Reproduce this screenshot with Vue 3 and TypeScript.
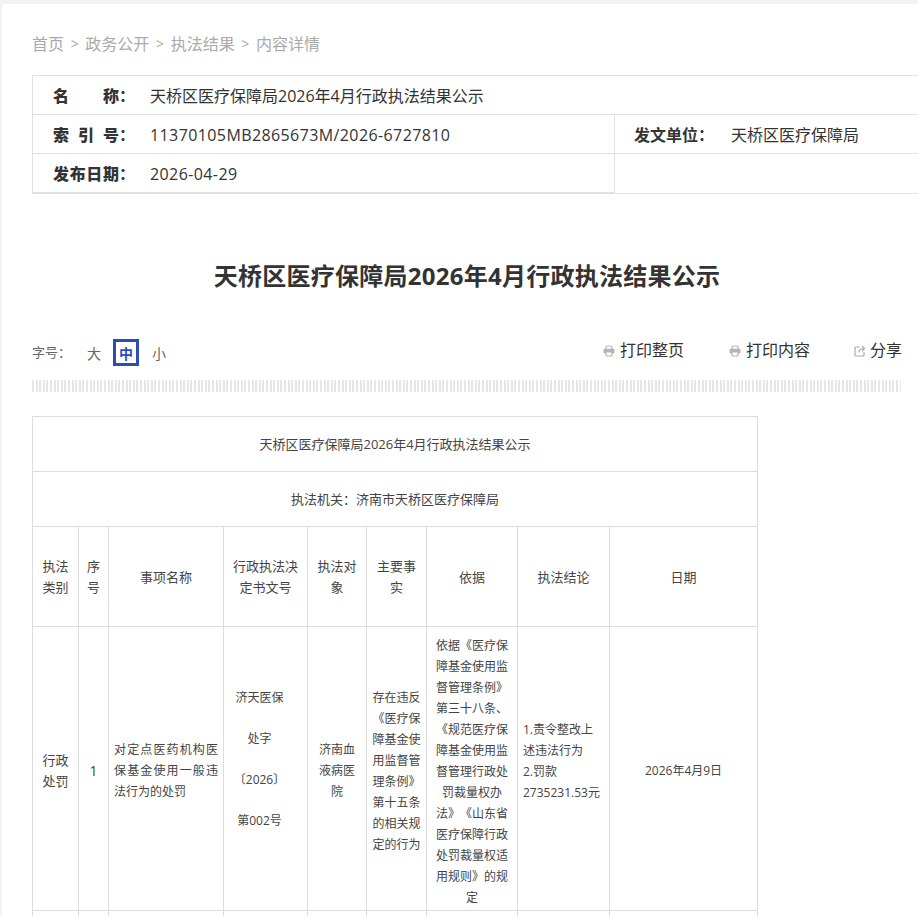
<script setup lang="ts">
const crumbs = ['首页', '政务公开', '执法结果', '内容详情']

const headers = ['执法类别', '序号', '事项名称', '行政执法决定书文号', '执法对象', '主要事实', '依据', '执法结论', '日期']
const colWidths = [46, 30, 115, 84, 59, 60, 91, 92, 148]

const docNo = ['济天医保', '处字', '〔2026〕', '第002号']
const printActions = ['打印整页', '打印内容']
</script>

<template>
  <div class="card">
    <div class="crumbs">
      <template v-for="(c, i) in crumbs" :key="c">
        <span v-if="i > 0" class="sep">&gt;</span>
        <span>{{ c }}</span>
      </template>
    </div>

    <div class="info">
      <div class="info-row">
        <span class="label"><b class="label-text">名称</b>：</span>
        <span class="value">天桥区医疗保障局2026年4月行政执法结果公示</span>
      </div>
      <div class="info-row">
        <div class="info-left">
          <span class="label"><b class="label-text">索引号</b>：</span>
          <span class="value num">11370105MB2865673M/2026-6727810</span>
        </div>
        <div class="info-right">
          <span class="label-right">发文单位：</span>
          <span class="value">天桥区医疗保障局</span>
        </div>
      </div>
      <div class="info-row last">
        <div class="info-left">
          <span class="label"><b class="label-text">发布日期</b>：</span>
          <span class="value num">2026-04-29</span>
        </div>
        <div class="info-right"></div>
      </div>
    </div>

    <h1 class="title">天桥区医疗保障局2026年4月行政执法结果公示</h1>

    <div class="toolbar">
      <div class="sizes">
        <span class="size-label">字号：</span>
        <span class="size">大</span>
        <span class="size active">中</span>
        <span class="size small">小</span>
      </div>
      <div class="actions">
        <span v-for="a in printActions" :key="a" class="action">
          <svg class="icon" viewBox="0 0 12 12">
            <path d="M3 4V2.200a1.200 1.200 0 0 1 1.200-1.200h3.600A1.200 1.200 0 0 1 9 2.200V4" fill="none" stroke="#b4b4b4" stroke-width="1.200" />
            <rect x="0.500" y="3.800" width="11" height="4.700" rx="1.300" fill="#b4b4b4" />
            <path d="M3 7h6v3a1 1 0 0 1-1 1H4a1 1 0 0 1-1-1z" fill="#fff" stroke="#b4b4b4" stroke-width="1.200" />
          </svg>
          {{ a }}
        </span>
        <span class="action share">
          <svg class="icon" viewBox="0 0 12 12">
            <path d="M5.500 2H2a1 1 0 0 0-1 1v7a1 1 0 0 0 1 1h7a1 1 0 0 0 1-1V7" fill="none" stroke="#aaa" stroke-width="1.200" />
            <path d="M5 7.500C5 5 6.500 3.500 9.500 3.500M8 1l2.500 2.500L8 6" fill="none" stroke="#aaa" stroke-width="1.200" />
          </svg>
          分享
        </span>
      </div>
    </div>

    <div class="stripes"></div>

    <table class="result">
      <colgroup>
        <col v-for="(w, i) in colWidths" :key="i" :style="{ width: w + 'px' }" />
      </colgroup>
      <tbody>
        <tr class="head-row">
          <td colspan="9">天桥区医疗保障局2026年4月行政执法结果公示</td>
        </tr>
        <tr class="head-row">
          <td colspan="9">执法机关：济南市天桥区医疗保障局</td>
        </tr>
        <tr class="col-row">
          <td v-for="h in headers" :key="h">{{ h }}</td>
        </tr>
        <tr class="data-row">
          <td class="big">行政处罚</td>
          <td class="one">1</td>
          <td class="just">对定点医药机构医保基金使用一般违法行为的处罚</td>
          <td class="docs">
            <p v-for="d in docNo" :key="d" class="doc">{{ d }}</p>
          </td>
          <td class="obj">济南血液病医院</td>
          <td>存在违反《医疗保障基金使用监督管理条例》第十五条的相关规定的行为</td>
          <td class="basis">依据《医疗保障基金使用监督管理条例》第三十八条、《规范医疗保障基金使用监督管理行政处罚裁量权办法》《山东省医疗保障行政处罚裁量权适用规则》的规定</td>
          <td class="left">1.责令整改上述违法行为<br />2.罚款2735231.53元</td>
          <td>2026年4月9日</td>
        </tr>
        <tr class="next-row">
          <td v-for="i in 9" :key="i"></td>
        </tr>
      </tbody>
    </table>
  </div>
</template>

<style>
html,
body {
  margin: 0;
  background: #f2f2f2;
  overflow: hidden;
}
</style>

<style scoped>
.card {
  height: 912px;
  box-sizing: border-box;
  margin: 4px 0 0 2px;
  padding: 28px 0 0 30px;
  background: #fff;
  border-radius: 4px 0 0 0;
  overflow: hidden;
  font-family: "Open Sans", "Noto Sans CJK SC", sans-serif;
  color: #333;
  text-spacing-trim: space-all;
}

.crumbs {
  display: flex;
  align-items: center;
  height: 22px;
  font-size: 16px;
  color: #aaa;
}

.sep {
  width: 21.33px;
  text-align: center;
  font-size: 14px;
}

.info {
  width: 920px;
  margin-top: 21px;
  border-top: 1px solid #e2e2e2;
  border-left: 1px solid #e2e2e2;
  font-size: 16px;
}

.info-row {
  display: flex;
  align-items: center;
  height: 38px;
  padding-left: 20px;
  border-bottom: 1px solid #e2e2e2;
}

.info-row:has(.info-left) {
  padding-left: 0;
  align-items: stretch;
}

.info-left {
  display: flex;
  align-items: center;
  width: 582px;
  padding-left: 20px;
  box-sizing: border-box;
  border-right: 1px solid #e2e2e2;
}

.last {
  height: 39px;
}

.last .info-left {
  border-bottom: 1px solid #e2e2e2;
}

.info-right {
  display: flex;
  align-items: center;
  padding-left: 19px;
}

.label {
  width: 97px;
  flex-shrink: 0;
  font-weight: 700;
}

.label-text {
  display: inline-block;
  width: 66px;
  text-align-last: justify;
}

.label-right {
  width: 97px;
  font-weight: 700;
}

.value {
  color: #333;
}

.num {
  padding-top: 1px;
  letter-spacing: 0.4px;
}

.title {
  margin: 64px 0 0;
  padding-right: 16px;
  text-align: center;
  font-size: 24px;
  line-height: 36px;
  font-weight: 700;
  letter-spacing: 0.25px;
  color: #333;
}

.toolbar {
  display: flex;
  justify-content: space-between;
  align-items: flex-start;
  width: 870px;
  margin-top: 45px;
}

.sizes {
  display: flex;
  align-items: center;
  color: #666;
}

.size-label {
  width: 48px;
  margin-right: 1px;
  padding-bottom: 2px;
  font-size: 13px;
}

.size {
  display: flex;
  align-items: center;
  justify-content: center;
  box-sizing: border-box;
  width: 26px;
  height: 27px;
  font-size: 14px;
}

.size.active {
  margin: 0 6px;
  border: 3px solid #2b4db5;
  color: #2b4db5;
  font-weight: 700;
}

.size.small {
  margin-left: 1px;
}

.actions {
  display: flex;
  align-items: center;
  font-size: 16px;
  line-height: 22px;
}

.action {
  display: flex;
  align-items: center;
  gap: 5px;
  margin-left: 45px;
}

.icon {
  width: 12px;
  height: 12px;
  margin-top: 2px;
}

.share {
  gap: 4px;
  margin-left: 44px;
}

.stripes {
  width: 869px;
  height: 12px;
  margin-top: 14px;
  background: repeating-linear-gradient(90deg, #e6e6e6 0 2px, #fff 2px 3.6px);
}

.result {
  width: 725px;
  margin-top: 24px;
  border-collapse: collapse;
  table-layout: fixed;
  font-size: 13px;
  line-height: 21px;
  color: #444;
}

.result td {
  border: 1px solid #dcdcdc;
  padding: 0 5px;
  text-align: center;
  vertical-align: middle;
}

.head-row td {
  height: 54px;
}

.col-row td {
  height: 98px;
  padding-top: 1px;
}

.data-row td {
  padding-top: 7px;
  padding-bottom: 3px;
  font-size: 12px;
}

.data-row td.big {
  font-size: 13px;
}

.data-row td.one {
  font-size: 14px;
}

.data-row td.just {
  text-align: justify;
}

.data-row td.docs {
  padding: 5px 17px 5px 5px;
}

.data-row td.obj {
  padding-left: 6px;
  padding-right: 6px;
}

.data-row td.basis {
  padding-top: 8px;
  padding-bottom: 2px;
}

.data-row td.left {
  padding: 5px 6px 21px 5px;
  text-align: left;
}

.doc {
  margin: 0 0 20px;
}

.next-row td {
  height: 60px;
}
</style>
